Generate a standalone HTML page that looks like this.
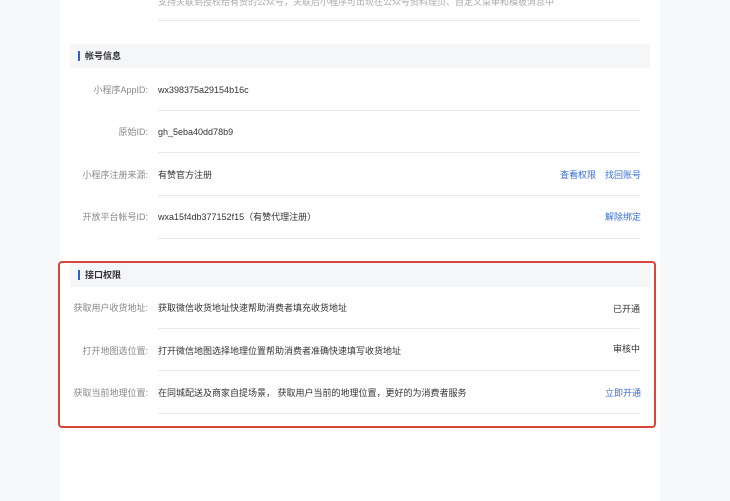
<!DOCTYPE html><html><head><meta charset="utf-8"><style>
body{margin:0;width:730px;height:501px;background:#f7f8fa;font-family:"Liberation Sans","Noto Sans CJK SC",sans-serif;font-size:9px;line-height:12px;color:#333;position:relative;overflow:hidden}
.card{position:absolute;left:60px;top:0;width:600px;height:501px;background:#fff}
.a,.lb{position:absolute;white-space:nowrap;line-height:12px;height:12px}
.hd{position:absolute;left:70px;width:580px;height:24px;background:#f5f6f8}
.hd span{position:absolute;left:8px;top:7px;font-size:9px;font-weight:bold;color:#333;border-left:2px solid #3160c9;padding-left:5px;line-height:10px}
.ln{position:absolute;left:158px;width:482px;height:1px;background:#eaeaea}
.lb{right:582px;color:#888}
.bl{color:#3a6fd0}
.red{position:absolute;left:58px;top:261px;width:594px;height:163px;border:2px solid #d9473a;border-radius:4px}
</style></head><body>
<div class="card"></div>
<div class="a" style="left:158px;top:-4px;color:#aaa">支持关联到授权给有赞的公众号，关联后小程序可出现在公众号资料理页、自定义菜单和模板消息中</div>
<div class="ln" style="top:20px"></div>
<div class="hd" style="top:44px"><span>帐号信息</span></div>
<div class="lb" style="top:84px">小程序AppID:</div><div class="a" style="left:158px;top:84px">wx398375a29154b16c</div><div class="ln" style="top:110px"></div>
<div class="lb" style="top:126px">原始ID:</div><div class="a" style="left:158px;top:126px">gh_5eba40dd78b9</div><div class="ln" style="top:152px"></div>
<div class="lb" style="top:169px">小程序注册来源:</div><div class="a" style="left:158px;top:169px">有赞官方注册</div><div class="a bl" style="left:560px;top:169px">查看权限</div><div class="a bl" style="left:605px;top:169px">找回账号</div><div class="ln" style="top:195px"></div>
<div class="lb" style="top:211px">开放平台帐号ID:</div><div class="a" style="left:158px;top:211px">wxa15f4db377152f15（有赞代理注册）</div><div class="a bl" style="left:605px;top:211px">解除绑定</div><div class="ln" style="top:238px"></div>
<div class="red"></div>
<div class="hd" style="top:263px"><span>接口权限</span></div>
<div class="lb" style="top:302px">获取用户收货地址:</div><div class="a" style="left:158px;top:302px">获取微信收货地址快速帮助消费者填充收货地址</div><div class="a" style="left:613px;top:303px">已开通</div><div class="ln" style="top:328px"></div>
<div class="lb" style="top:345px">打开地图选位置:</div><div class="a" style="left:158px;top:345px">打开微信地图选择地理位置帮助消费者准确快速填写收货地址</div><div class="a" style="left:613px;top:343px">审核中</div><div class="ln" style="top:370px"></div>
<div class="lb" style="top:387px">获取当前地理位置:</div><div class="a" style="left:158px;top:387px">在同城配送及商家自提场景， 获取用户当前的地理位置，更好的为消费者服务</div><div class="a bl" style="left:605px;top:387px">立即开通</div><div class="ln" style="top:413px"></div>
</body></html>
